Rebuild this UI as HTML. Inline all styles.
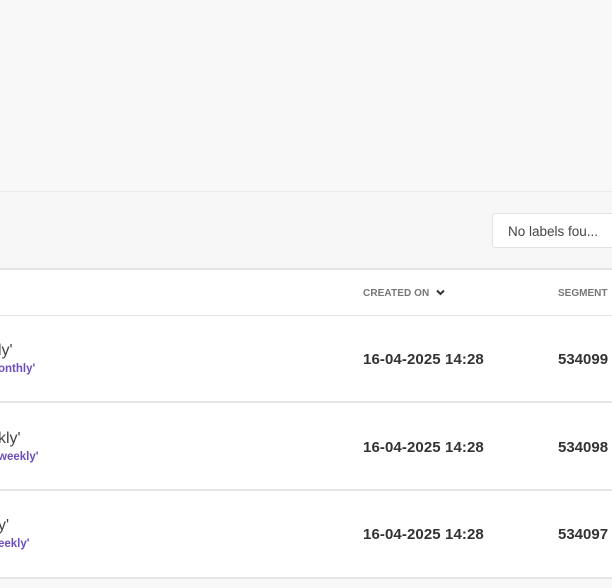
<!DOCTYPE html>
<html><head><style>
body{margin:0;width:612px;height:588px;overflow:hidden;background:#f8f8f8;font-family:"Liberation Sans",sans-serif;position:relative}
.a{position:absolute}
.row{position:absolute;left:0;width:612px;background:#fff;border-bottom:2px solid #e6e6e6}
.t{position:absolute;left:-2px;font-size:16px;color:#444}
.s{position:absolute;left:-2px;font-size:11.5px;font-weight:bold;color:#6a4fc2}
.d{position:absolute;left:363px;font-size:15px;font-weight:bold;color:#333;letter-spacing:0.1px}
.g{position:absolute;left:558px;font-size:15px;font-weight:bold;color:#333}
</style></head><body>
<div class="a" style="top:191px;left:0;width:612px;height:1px;background:#ebebeb"></div>
<div class="a" style="top:192px;left:0;width:612px;height:76px;background:#f7f7f7"></div>
<div class="a" style="top:213px;left:492px;width:130px;height:35px;background:#fff;border:1px solid #e2e2e2;border-radius:3px;box-sizing:border-box;font-size:13.5px;color:#444;padding:10px 0 0 15px">No labels fou...</div>
<div class="a" style="top:268px;left:0;width:612px;height:2px;background:#e4e4e4"></div>
<div class="a" style="top:270px;left:0;width:612px;height:45px;background:#fff;border-bottom:1px solid #e6e6e6"></div>
<div class="a" style="top:288px;left:363px;font-size:10px;color:#777;font-weight:bold;letter-spacing:0.1px">CREATED ON</div>
<svg class="a" style="top:289px;left:436px" width="9" height="7" viewBox="0 0 9 7"><path d="M1 1.5 L4.5 5 L8 1.5" stroke="#333" stroke-width="2" fill="none"/></svg>
<div class="a" style="top:288px;left:558px;font-size:10px;color:#777;font-weight:bold">SEGMENT</div>
<div class="row" style="top:316px;height:85px">
<div class="t" style="top:26px">ly'</div><div class="s" style="top:47px">onthly'</div>
<div class="d" style="top:35px">16-04-2025 14:28</div><div class="g" style="top:35px">534099</div></div>
<div class="row" style="top:403px;height:86px">
<div class="t" style="top:27px">kly'</div><div class="s" style="top:48px">weekly'</div>
<div class="d" style="top:36px">16-04-2025 14:28</div><div class="g" style="top:36px">534098</div></div>
<div class="row" style="top:491px;height:86px">
<div class="t" style="top:26px">y'</div><div class="s" style="top:47px">eekly'</div>
<div class="d" style="top:35px">16-04-2025 14:28</div><div class="g" style="top:35px">534097</div></div>
</body></html>
